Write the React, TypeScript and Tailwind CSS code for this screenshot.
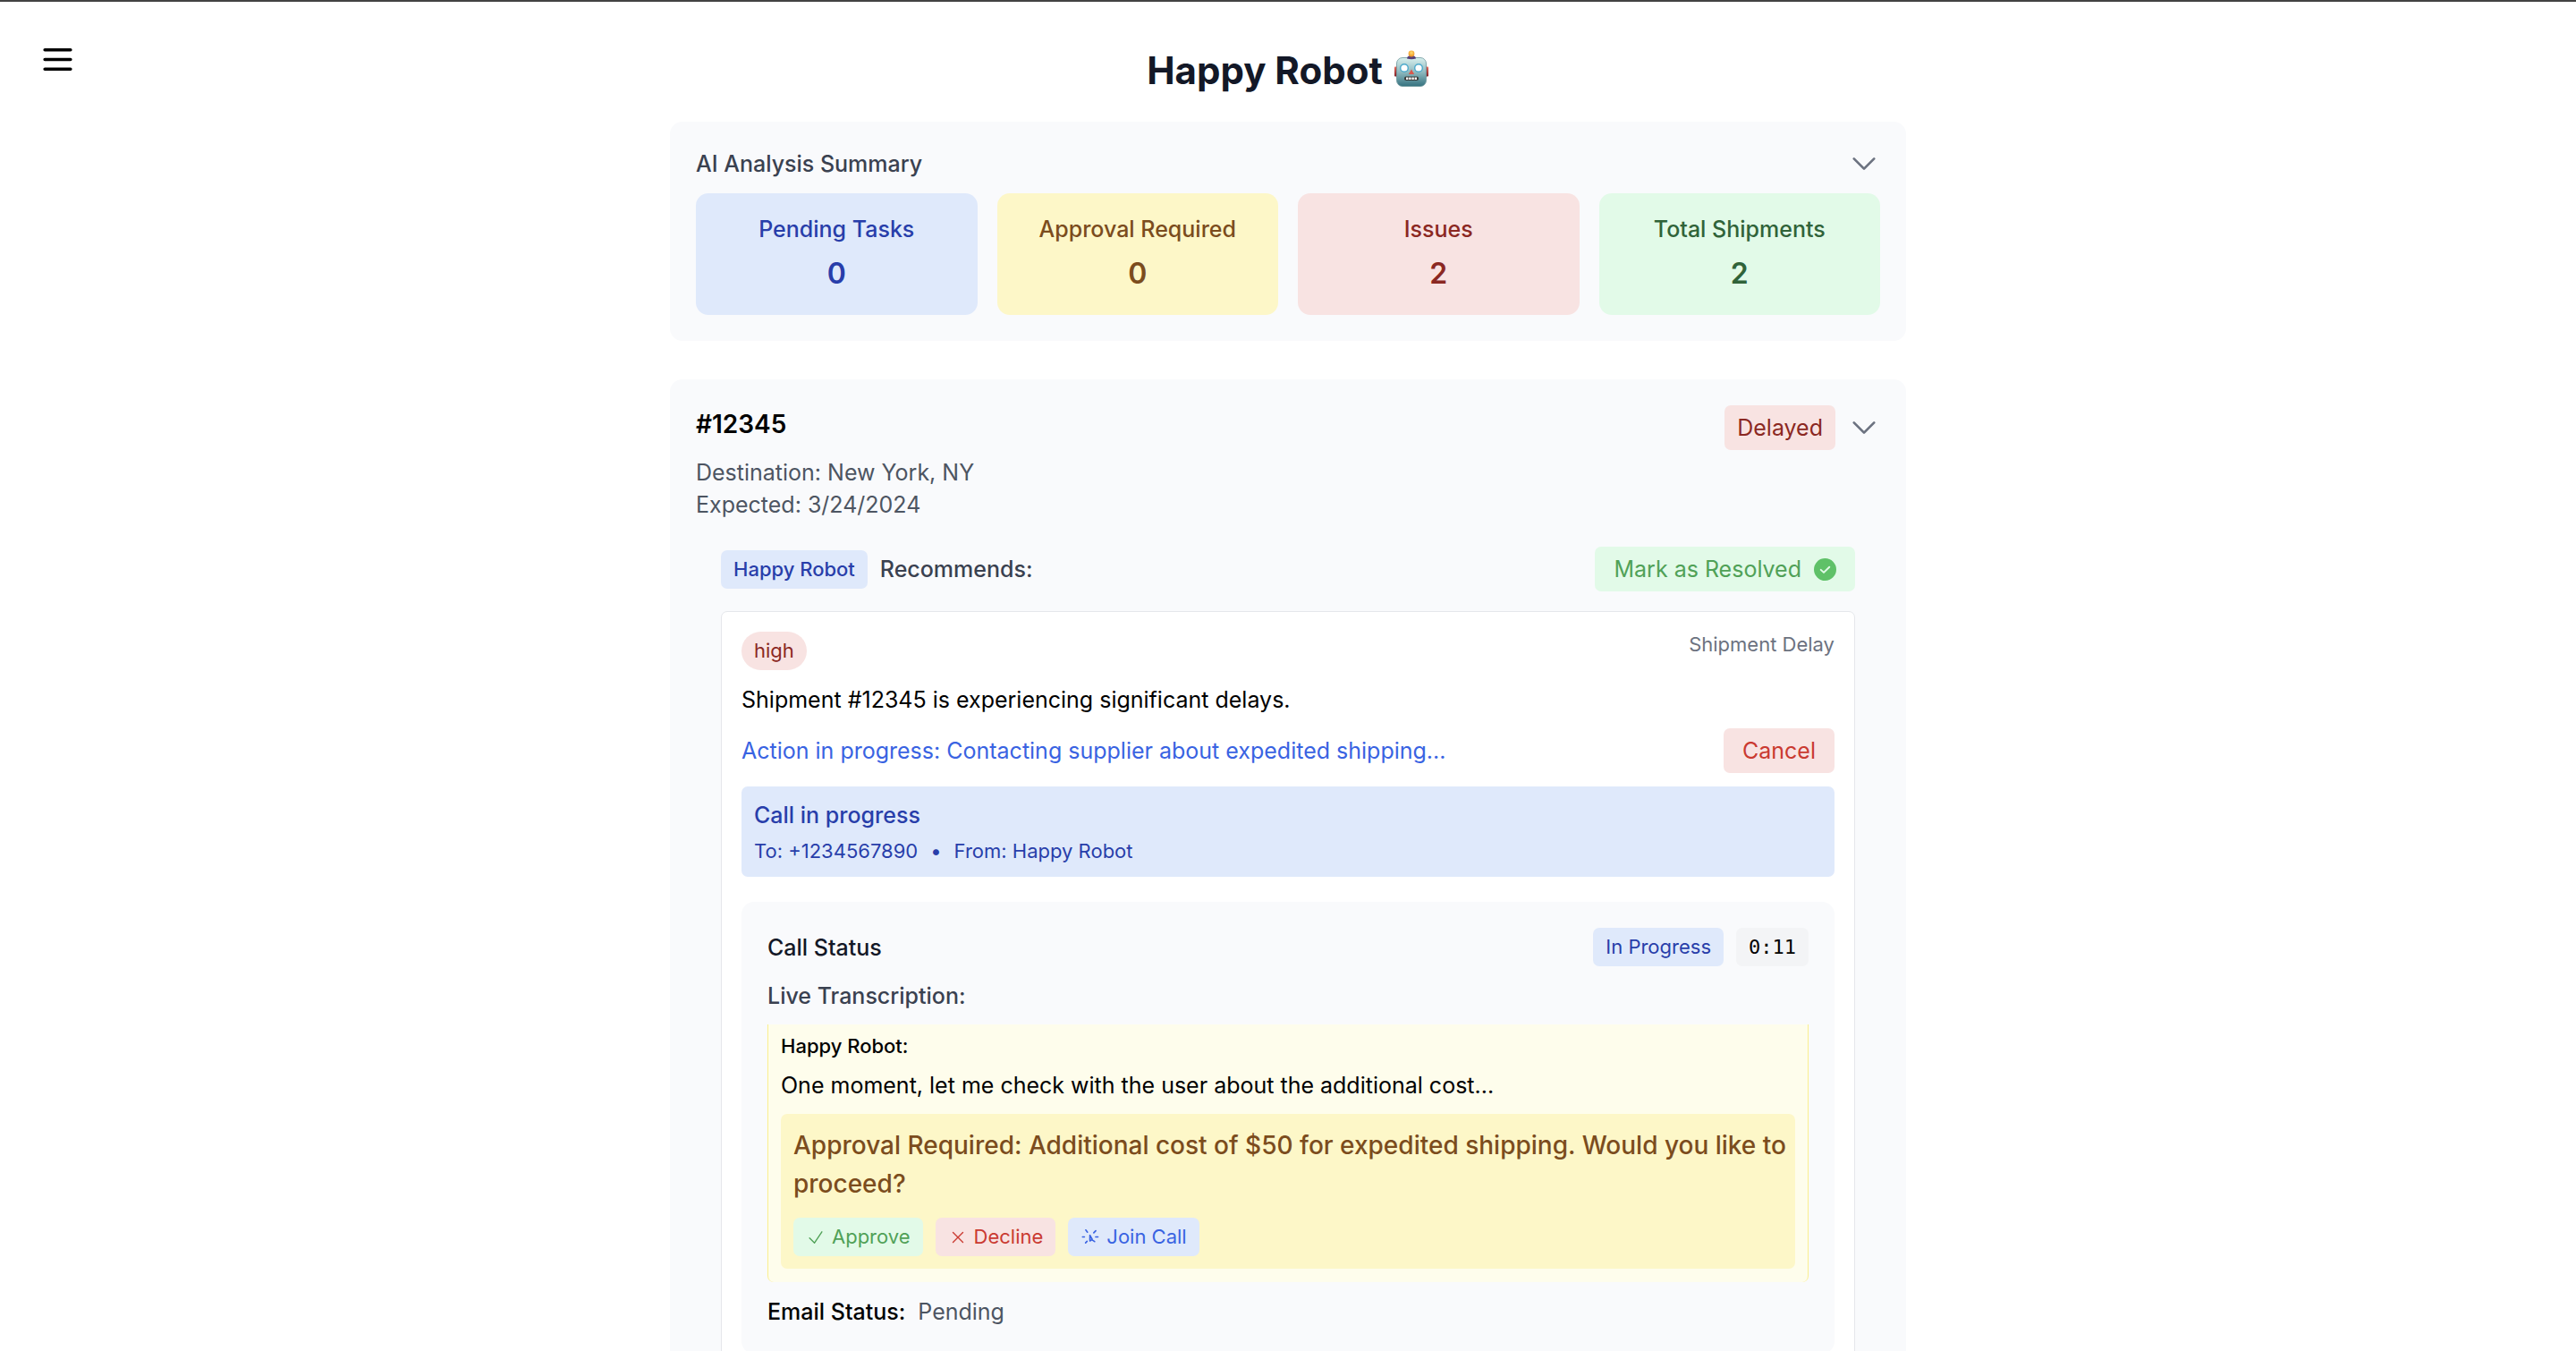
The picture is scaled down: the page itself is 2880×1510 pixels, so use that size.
import { useState } from "react";
import type { ReactNode } from "react";

function ChevronDown() {
  return (
    <svg viewBox="0 0 24 24" fill="none" stroke="currentColor" strokeWidth={1.8} strokeLinecap="round" strokeLinejoin="round" className="size-9" aria-hidden="true">
      <path d="m19.5 8.25-7.5 7.5-7.5-7.5" />
    </svg>
  );
}

function CheckCircle() {
  return (
    <svg viewBox="2 2 20 20" className="size-[25px]" aria-hidden="true">
      <circle cx="12" cy="12" r="10" fill="#5fc168" />
      <path d="m8.200 12.300 2.600 2.400 5-4.900" fill="none" stroke="#e2fae8" strokeWidth="1.600" strokeLinecap="round" strokeLinejoin="round" />
    </svg>
  );
}

const iconProps = {
  viewBox: "0 0 24 24",
  fill: "none",
  stroke: "currentColor",
  strokeWidth: 1.5,
  strokeLinecap: "round" as const,
  strokeLinejoin: "round" as const,
  className: "size-[22px]",
  "aria-hidden": true,
};

function Robot() {
  return (
    <svg viewBox="0 0 40 42" className="h-[42px] w-10" role="img" aria-label="robot">
      <defs>
        <linearGradient id="face" x1="0" y1="0" x2="0" y2="1">
          <stop offset="0" stopColor="#d9f0ee" />
          <stop offset="0.5" stopColor="#8fb9bf" />
          <stop offset="1" stopColor="#34727f" />
        </linearGradient>
        <radialGradient id="bulb" cx="0.5" cy="0.35" r="0.6">
          <stop offset="0" stopColor="#ffdf70" />
          <stop offset="1" stopColor="#ef9322" />
        </radialGradient>
        <linearGradient id="ear" x1="0" y1="0" x2="0" y2="1">
          <stop offset="0" stopColor="#e5685b" />
          <stop offset="1" stopColor="#7c2027" />
        </linearGradient>
      </defs>
      <rect x="1" y="18.5" width="4" height="11" rx="1" fill="url(#ear)" />
      <rect x="35" y="18.5" width="4" height="11" rx="1" fill="url(#ear)" />
      <rect x="3.5" y="8.5" width="33" height="32" rx="6.5" fill="url(#face)" stroke="#6d979c" strokeWidth="0.8" />
      <path d="M15 9.500q0-3.500 5-3.500t5 3.500q-5 1.500-10 0Z" fill="#574178" />
      <circle cx="20" cy="4" r="3.400" fill="url(#bulb)" />
      <circle cx="12" cy="20" r="4.300" fill="#fff" stroke="#4ba9cb" strokeWidth="1.400" />
      <circle cx="28" cy="20" r="4.300" fill="#fff" stroke="#4ba9cb" strokeWidth="1.400" />
      <path d="m20 21.500 3.200 5.500h-6.400Z" fill="#d9584d" />
      <rect x="12" y="29.500" width="16" height="4.500" rx="2" fill="#3a3a38" />
      <path d="M14 31.750h12" stroke="#fff" strokeWidth="2.600" strokeDasharray="2.400 0.800" />
    </svg>
  );
}

const stats = [
  { label: "Pending Tasks", value: 0, style: "bg-[#dfe9fb] text-[#283eaa]" },
  { label: "Approval Required", value: 0, style: "bg-[#fdf7c8] text-[#7b4c1d]" },
  { label: "Issues", value: 2, style: "bg-[#f8e3e2] text-[#8b2822]" },
  { label: "Total Shipments", value: 2, style: "bg-[#e2fae8] text-[#306339]" },
];

function SmallButton({ style, children }: { style: string; children: ReactNode }) {
  return (
    <button type="button" className={`flex items-center gap-[7px] rounded-[7px] px-[14px] py-[7px] text-[22px] leading-[29px] ${style}`}>
      {children}
    </button>
  );
}

export default function App() {
  const [open, setOpen] = useState(true);
  const [details, setDetails] = useState(true);

  return (
    <div className="h-screen overflow-hidden border-t-2 border-[#424242] bg-white font-['Inter',sans-serif] text-[25px] leading-[36px] text-black">
      <header className="relative">
        <button type="button" aria-label="Open menu" className="absolute top-[43px] left-[43px]">
          <svg viewBox="0 0 24 24" fill="none" stroke="currentColor" strokeWidth={2} strokeLinecap="round" className="size-[43px]" aria-hidden="true">
            <path d="M4 6h16M4 12h16M4 18h16" />
          </svg>
        </button>
      </header>
      <main className="mx-auto w-full max-w-[1382px] pt-[48px]">
        <h1 className="flex items-start justify-center gap-3 text-[42px] leading-[58px] font-bold text-[#131827]">
          Happy Robot
          <span className="pt-[6px]"><Robot /></span>
        </h1>

        <section className="mt-[28px] rounded-[14px] bg-[#f9fafc] p-[29px]">
          <div className="flex items-center justify-between">
            <h2 className="font-medium text-[#3a4150]">AI Analysis Summary</h2>
            <button type="button" aria-label="Toggle summary" onClick={() => setOpen(!open)} className="text-[#6c7280]">
              <ChevronDown />
            </button>
          </div>
          {open && (
            <dl className="mt-[15px] grid grid-cols-4 gap-[22px] text-center">
              {stats.map((s) => (
                <div key={s.label} className={`rounded-[14px] px-[22px] py-[22px] ${s.style}`}>
                  <dt className="font-medium">{s.label}</dt>
                  <dd className="mt-[7px] text-[32px] leading-[49px] font-semibold">{s.value}</dd>
                </div>
              ))}
            </dl>
          )}
        </section>

        <section className="mt-[43px] rounded-[14px] bg-[#f9fafc] p-[29px]">
          <div className="flex items-start justify-between">
            <div>
              <h2 className="text-[28px] leading-[43px] font-semibold">#12345</h2>
              <p className="mt-[14px] text-[#4d5562]">Destination: New York, NY</p>
              <p className="text-[#4d5562]">Expected: 3/24/2024</p>
            </div>
            <div className="flex items-center gap-[14px]">
              <span className="rounded-[7px] bg-[#f8e3e2] px-[14px] py-[7px] text-[#8b2822]">Delayed</span>
              <button type="button" aria-label="Toggle shipment" onClick={() => setDetails(!details)} className="text-[#6c7280]">
                <ChevronDown />
              </button>
            </div>
          </div>

          {details && (
            <div className="mt-[29px] px-[28px]">
              <div className="flex items-center justify-between">
                <div className="flex items-center gap-[14px]">
                  <span className="rounded-[7px] bg-[#dfe9fb] px-[14px] py-[7px] text-[22px] leading-[29px] font-medium text-[#283eaa]">Happy Robot</span>
                  <h3 className="font-medium text-[#3a4150]">Recommends:</h3>
                </div>
                <button type="button" className="flex items-center gap-[14px] rounded-[7px] bg-[#e2fae8] px-[21px] py-[7px] text-[#50a157]">
                  Mark as Resolved
                  <CheckCircle />
                </button>
              </div>

              <div className="mt-[22px] rounded-[7px] border border-[#e5e7eb] bg-white p-[22px]">
                <div className="flex items-start justify-between">
                  <span className="rounded-full bg-[#f8e3e2] px-[14px] py-[7px] text-[22px] leading-[29px] text-[#8b2822]">high</span>
                  <span className="text-[22px] leading-[29px] text-[#6c7280]">Shipment Delay</span>
                </div>
                <p className="mt-[15px]">Shipment #12345 is experiencing significant delays.</p>
                <div className="mt-[14px] flex items-center justify-between">
                  <p className="text-[#3963e2]">Action in progress: Contacting supplier about expedited shipping...</p>
                  <button type="button" className="rounded-[7px] bg-[#f8e3e2] px-[21px] py-[7px] text-[#ca3a31]">Cancel</button>
                </div>

                <div className="mt-[15px] rounded-[7px] bg-[#dfe9fb] p-[14px] text-[#283eaa]">
                  <p className="font-medium">Call in progress</p>
                  <p className="mt-[8px] flex gap-[14px] text-[22px] leading-[29px]">
                    <span>To: +1234567890</span>
                    <span>•</span>
                    <span>From: Happy Robot</span>
                  </p>
                </div>

                <div className="mt-[28px] rounded-[14px] bg-[#f9fafc] p-[29px]">
                  <div className="flex items-center justify-between">
                    <h4 className="font-medium text-[#131827]">Call Status</h4>
                    <div className="flex items-center gap-[14px]">
                      <span className="rounded-[7px] bg-[#dfe9fb] px-[14px] py-[7px] text-[22px] leading-[29px] text-[#283eaa]">In Progress</span>
                      <span className="rounded-[7px] bg-[#f3f4f6] px-[14px] py-[7px] font-['DejaVu_Sans_Mono',monospace] text-[22px] leading-[29px]">0:11</span>
                    </div>
                  </div>
                  <h5 className="mt-[15px] font-medium text-[#3a4150]">Live Transcription:</h5>
                  <div className="mt-[14px] rounded-b-[7px] border-x border-[#fbef8f] bg-[#fefdec] px-[14px] pt-[10px] pb-[15px]">
                    <p className="text-[22px] leading-[29px] font-medium">Happy Robot:</p>
                    <p className="mt-[11px]">One moment, let me check with the user about the additional cost...</p>
                    <div className="mt-[14px] rounded-[7px] bg-[#fdf7c8] py-[14px] pr-[4px] pl-[14px]">
                      <p className="text-[28px] leading-[43px] font-medium text-[#7b4c1d]">
                        Approval Required: Additional cost of $50 for expedited shipping. Would you like to proceed?
                      </p>
                      <div className="mt-[16px] flex gap-[14px]">
                        <SmallButton style="bg-[#e2fae8] text-[#50a157]">
                          <svg {...iconProps}><path d="m4.500 12.750 6 6 9-13.500" /></svg>
                          Approve
                        </SmallButton>
                        <SmallButton style="bg-[#f8e3e2] text-[#ca3a31]">
                          <svg {...iconProps}><path d="M6 18 18 6M6 6l12 12" /></svg>
                          Decline
                        </SmallButton>
                        <SmallButton style="bg-[#dfe9fb] text-[#3963e2]">
                          <svg {...iconProps} strokeWidth={1.8}>
                            <path d="M2.500 11.500h2.300M18.500 11.500h2.800M6.500 3l2 2.600M18.600 4l-2.400 2.400M8 16.800l-1.800 1.800M11.500 9.500v6.800l2.300-1.500 3.400 2.300M11.500 9.500l2.800 4.800" />
                          </svg>
                          Join Call
                        </SmallButton>
                      </div>
                    </div>
                  </div>
                  <p className="mt-[15px] flex gap-[14px]">
                    <span className="font-medium">Email Status:</span>
                    <span className="text-[#4d5562]">Pending</span>
                  </p>
                </div>
              </div>
            </div>
          )}
        </section>
      </main>
    </div>
  );
}
